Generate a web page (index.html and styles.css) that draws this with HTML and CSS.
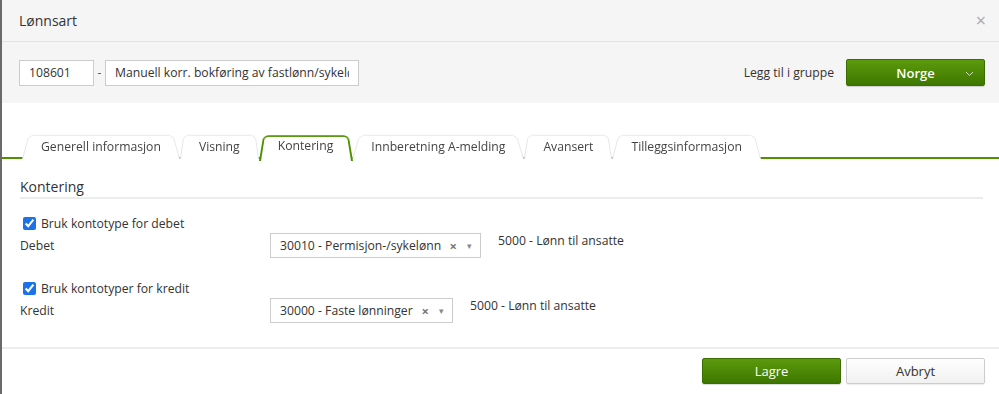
FILE: index.html
```html
<!DOCTYPE html>
<html lang="no">
<head>
<meta charset="utf-8">
<title>Lønnsart</title>
<link rel="stylesheet" href="styles.css">
</head>
<body>
<div class="modal">
  <div class="modal-header">
    <h1 class="modal-title">Lønnsart</h1>
    <span class="close">×</span>
  </div>
  <div class="modal-top">
    <div class="id-fields">
      <input class="field field-id" type="text" value="108601">
      <span class="dash">-</span>
      <input class="field field-name" type="text" value="Manuell korr. bokføring av fastlønn/sykelønn">
    </div>
    <div class="group">
      <span class="group-label">Legg til i gruppe</span>
      <button class="btn-green btn-group">Norge
        <svg class="caret" width="9" height="6" viewBox="0 0 9 6"><path d="M1 1 L4.5 4.5 L8 1" fill="none" stroke="#cfe3b8" stroke-width="1"/></svg>
      </button>
    </div>
  </div>
  <div class="tabs">
    <div class="tab"><span>Generell informasjon</span></div>
    <div class="tab"><span>Visning</span></div>
    <div class="tab active"><span>Kontering</span></div>
    <div class="tab"><span>Innberetning A-melding</span></div>
    <div class="tab"><span>Avansert</span></div>
    <div class="tab"><span>Tilleggsinformasjon</span></div>
  </div>
  <div class="content">
    <h2 class="section-title">Kontering</h2>
    <div class="block">
      <label class="check"><input type="checkbox" checked> Bruk kontotype for debet</label>
      <div class="row">
        <span class="row-label">Debet</span>
        <div class="select select-debet"><span class="sel-text">30010 - Permisjon-/sykelønn</span><span class="sel-x">×</span><span class="sel-arrow">▾</span></div>
        <span class="account">5000 - Lønn til ansatte</span>
      </div>
    </div>
    <div class="block block-2">
      <label class="check"><input type="checkbox" checked> Bruk kontotyper for kredit</label>
      <div class="row">
        <span class="row-label">Kredit</span>
        <div class="select select-kredit"><span class="sel-text">30000 - Faste lønninger</span><span class="sel-x">×</span><span class="sel-arrow">▾</span></div>
        <span class="account">5000 - Lønn til ansatte</span>
      </div>
    </div>
  </div>
  <div class="footer">
    <button class="btn-green btn-save">Lagre</button>
    <button class="btn-cancel">Avbryt</button>
  </div>
</div>
</body>
</html>
```
FILE: styles.css
```css
* { box-sizing: border-box; }
html, body { margin: 0; padding: 0; background: #fff; }
body {
  font-family: "Open Sans", "Noto Sans", sans-serif;
  font-size: 12px;
  color: #333;
}
.modal {
  width: 999px;
  height: 394px;
  border-left: 2px solid #6a6a6a;
  background: #fff;
  overflow: hidden;
}
.modal-header {
  height: 42px;
  background: #f5f5f5;
  border-bottom: 1px solid #e3e3e3;
  display: flex;
  align-items: center;
  justify-content: space-between;
  padding: 0 13px 0 17px;
}
.modal-title {
  margin: 0;
  font-size: 14px;
  font-weight: 400;
  color: #333;
}
.close {
  font-size: 18px;
  color: #aaa;
  line-height: 1;
  margin-top: -1px;
}
.modal-top {
  height: 61px;
  background: #f5f5f5;
  display: flex;
  align-items: center;
  justify-content: space-between;
  padding: 0 14px 0 17px;
}
.id-fields { display: flex; align-items: center; }
.field {
  height: 26px;
  border: 1px solid #ccc;
  background: #fff;
  font-family: inherit;
  font-size: 12.2px;
  color: #333;
  padding: 0 9px;
  outline: none;
}
.field-id { width: 75px; }
.field-name { width: 254px; }
.dash { width: 11px; text-align: center; color: #555; }
.group { display: flex; align-items: center; }
.group-label { margin-right: 12px; color: #333; font-size: 12.2px; }
.btn-green {
  background: linear-gradient(#5c9a0d, #3e7700);
  border: 1px solid #3a6e00;
  border-radius: 2px;
  color: #fff;
  font-family: inherit;
  font-size: 13px;
  font-weight: 600;
  box-shadow: 0 1px 1px rgba(0,0,0,0.15);
}
.btn-group {
  width: 139px;
  height: 27px;
  position: relative;
  padding: 0;
}
.caret { position: absolute; right: 10px; top: 11px; }
.tabs {
  display: flex;
  margin-top: 27px;
  padding-left: 20px;
  height: 29px;
  border-bottom: 2px solid #4e9200;
  position: relative;
}
.tab {
  position: relative;
  padding: 0 19px;
  height: 27px;
  line-height: 30px;
  color: #444;
  font-size: 12.2px;
  z-index: 1;
  margin-top: 2px;
}
.tab span { position: relative; z-index: 2; }
.tab::before {
  content: "";
  position: absolute;
  left: 0; right: 0; top: 0; bottom: 0;
  border: 1px solid #e6e6e6;
  border-bottom: none;
  border-radius: 6px 6px 0 0;
  background: #fff;
  transform: perspective(60px) rotateX(12deg);
  transform-origin: bottom;
}
.tab.active { z-index: 3; margin-bottom: -2px; height: 29px; line-height: 28px; }
.tab.active::before {
  border: 2px solid #4e9200;
  border-bottom: none;
}
.content { padding: 0 16px 0 18px; }
.section-title {
  margin: 18px 0 0 0;
  font-size: 14px;
  font-weight: 400;
  color: #333;
  padding-bottom: 1px;
  border-bottom: 2px solid #ececec;
  line-height: 19px;
}
.block { margin-top: 15px; }
.block-2 { margin-top: 21px; }
.check {
  display: flex;
  align-items: center;
  padding-left: 3px;
  height: 18px;
  color: #333;
  font-size: 12.2px;
}
.check input {
  width: 13px; height: 13px;
  margin: 0 5px 0 0;
  accent-color: #1a73e8;
}
.row { display: flex; align-items: center; height: 25px; margin-top: 1px; font-size: 12.2px; }
.row-label { width: 250px; }
.select {
  height: 25px;
  border: 1px solid #ccc;
  display: flex;
  align-items: center;
  padding-left: 9px;
  color: #333;
}
.select-debet { width: 211px; }
.select-kredit { width: 183px; }
.sel-text { flex: 1; white-space: nowrap; overflow: hidden; }
.sel-x { color: #777; font-size: 13px; font-weight: 700; margin: 0 10px 0 4px; }
.sel-arrow { color: #888; font-size: 9px; margin-right: 8px; }
.account { margin-left: 17px; align-self: flex-start; line-height: 16px; }
.footer {
  margin-top: 24px;
  border-top: 2px solid #ededed;
  display: flex;
  justify-content: flex-end;
  padding: 9px 14px 0 0;
  gap: 5px;
}
.btn-save { width: 139px; height: 26px; padding: 0; font-weight: 400; }
.btn-cancel {
  width: 139px;
  height: 26px;
  border: 1px solid #ccc;
  border-radius: 2px;
  background: linear-gradient(#fff, #f1f1f1);
  font-family: inherit;
  font-size: 13px;
  color: #333;
  box-shadow: 0 1px 1px rgba(0,0,0,0.08);
}
```
